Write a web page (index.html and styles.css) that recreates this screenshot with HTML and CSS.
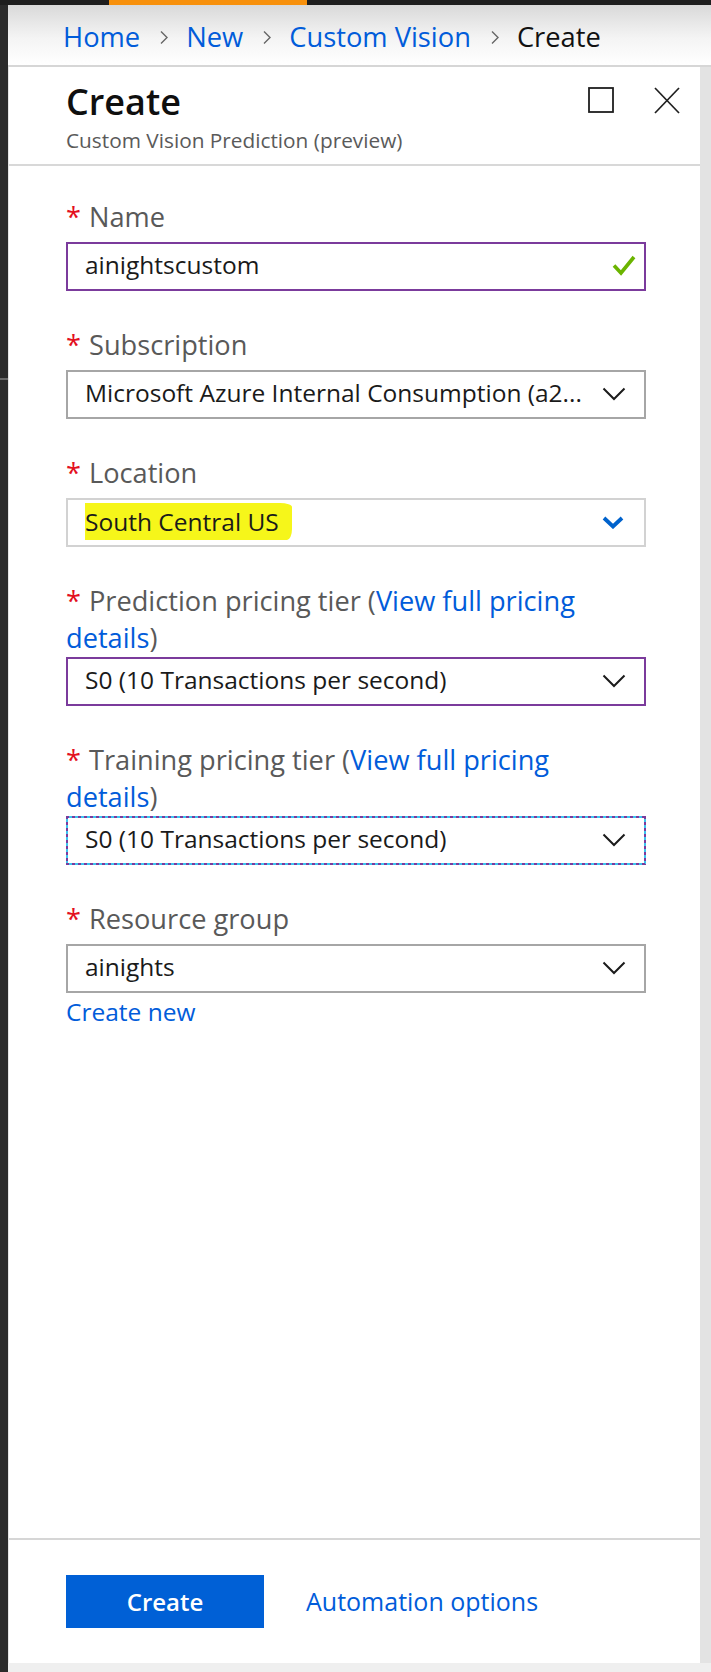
FILE: index.html
```html
<!DOCTYPE html>
<html lang="en">
<head>
<meta charset="utf-8">
<title>Create - Custom Vision</title>
<link rel="stylesheet" href="styles.css">
</head>
<body>
<div class="topbar"><div class="topbar-accent"></div></div>
<div class="shell">
  <div class="leftrail"></div>
  <div class="main">
    <nav class="breadcrumb">
      <a class="crumb" href="#">Home</a>
      <svg class="sep" width="10" height="15" viewBox="0 0 10 15"><polyline points="2,1.5 8,7.5 2,13.5" fill="none" stroke="#666" stroke-width="1.4"/></svg>
      <a class="crumb" href="#">New</a>
      <svg class="sep" width="10" height="15" viewBox="0 0 10 15"><polyline points="2,1.5 8,7.5 2,13.5" fill="none" stroke="#666" stroke-width="1.4"/></svg>
      <a class="crumb" href="#">Custom Vision</a>
      <svg class="sep" width="10" height="15" viewBox="0 0 10 15"><polyline points="2,1.5 8,7.5 2,13.5" fill="none" stroke="#666" stroke-width="1.4"/></svg>
      <span class="crumb current">Create</span>
    </nav>
    <div class="workspace">
      <section class="blade">
        <header class="blade-header">
          <div class="titles">
            <h1 class="title">Create</h1>
            <p class="subtitle">Custom Vision Prediction (preview)</p>
          </div>
          <div class="actions">
            <svg class="icon-max" width="26" height="26" viewBox="0 0 26 26"><rect x="1" y="1" width="24" height="24" fill="none" stroke="#1f1f1f" stroke-width="1.8"/></svg>
            <svg class="icon-close" width="26" height="27" viewBox="0 0 26 27"><line x1="1" y1="1" x2="25" y2="26" stroke="#1f1f1f" stroke-width="1.7"/><line x1="25" y1="1" x2="1" y2="26" stroke="#1f1f1f" stroke-width="1.7"/></svg>
          </div>
        </header>

        <div class="form">
          <div class="field">
            <div class="label"><span class="req">*</span>Name</div>
            <div class="box box-focus">
              <span class="value">ainightscustom</span>
              <svg class="check" width="24" height="21" viewBox="0 0 24 21"><polyline points="2,10.5 9,18 22,2" fill="none" stroke="#6bb400" stroke-width="3.6"/></svg>
            </div>
          </div>

          <div class="field">
            <div class="label"><span class="req">*</span>Subscription</div>
            <div class="box">
              <span class="value">Microsoft Azure Internal Consumption (a2...</span>
              <svg class="chev" width="24" height="14" viewBox="0 0 24 14"><polyline points="1.5,1.5 12,12 22.5,1.5" fill="none" stroke="#1b1b1b" stroke-width="2"/></svg>
            </div>
          </div>

          <div class="field">
            <div class="label"><span class="req">*</span>Location</div>
            <div class="box box-light">
              <span class="value"><span class="marker">South Central US</span></span>
              <svg class="chev chev-blue" width="22" height="13" viewBox="0 0 22 13"><polyline points="2,2 11,10.5 20,2" fill="none" stroke="#0062cc" stroke-width="3.8"/></svg>
            </div>
          </div>

          <div class="field">
            <div class="label label-two"><span class="req">*</span>Prediction pricing tier (<a class="link" href="#">View full pricing<br>details</a>)</div>
            <div class="box box-focus">
              <span class="value">S0 (10 Transactions per second)</span>
              <svg class="chev" width="24" height="14" viewBox="0 0 24 14"><polyline points="1.5,1.5 12,12 22.5,1.5" fill="none" stroke="#1b1b1b" stroke-width="2"/></svg>
            </div>
          </div>

          <div class="field">
            <div class="label label-two"><span class="req">*</span>Training pricing tier (<a class="link" href="#">View full pricing<br>details</a>)</div>
            <div class="box box-dashed">
              <span class="value">S0 (10 Transactions per second)</span>
              <svg class="chev" width="24" height="14" viewBox="0 0 24 14"><polyline points="1.5,1.5 12,12 22.5,1.5" fill="none" stroke="#1b1b1b" stroke-width="2"/></svg>
            </div>
          </div>

          <div class="field field-last">
            <div class="label"><span class="req">*</span>Resource group</div>
            <div class="box">
              <span class="value">ainights</span>
              <svg class="chev" width="24" height="14" viewBox="0 0 24 14"><polyline points="1.5,1.5 12,12 22.5,1.5" fill="none" stroke="#1b1b1b" stroke-width="2"/></svg>
            </div>
            <a class="create-new" href="#">Create new</a>
          </div>
        </div>

        <footer class="blade-footer">
          <button class="btn-primary" type="button">Create</button>
          <a class="footer-link" href="#">Automation options</a>
        </footer>
      </section>
      <div class="gutter"></div>
    </div>
    <div class="bottom-strip"></div>
  </div>
</div>
</body>
</html>
```

FILE: styles.css
```css
* {
  box-sizing: border-box;
}

html, body {
  margin: 0;
  padding: 0;
}

body {
  width: 711px;
  height: 1672px;
  overflow: hidden;
  background: #2b2b2b;
  font-family: "Open Sans", "Noto Sans", sans-serif;
  color: #1b1b1b;
}

a {
  text-decoration: none;
}

.topbar {
  height: 5px;
  background: #1e1e1e;
  display: flex;
}

.topbar-accent {
  margin-left: 109px;
  width: 198px;
  height: 5px;
  background: #f7900c;
}

.shell {
  display: flex;
  height: 1667px;
}

.leftrail {
  width: 8px;
  flex: none;
  background: linear-gradient(to bottom, #2b2b2b 0, #2b2b2b 373px, #6a6a6a 373px, #6a6a6a 375px, #2b2b2b 375px);
}

.main {
  flex: 1;
  display: flex;
  flex-direction: column;
  min-width: 0;
}

.breadcrumb {
  height: 60px;
  padding: 4px 0 0 55px;
  display: flex;
  align-items: center;
  background: linear-gradient(to bottom, #d9d9d9 0%, #f4f4f4 55%, #ffffff 100%);
  font-size: 27.3px;
  line-height: 56px;
}

.crumb {
  color: #015cda;
  white-space: nowrap;
}

.crumb.current {
  color: #111;
}

.sep {
  flex: none;
  margin: 0 17px 0 19px;
}

.workspace {
  display: flex;
  border-top: 2px solid #d6d6d6;
  height: 1598px;
}

.blade {
  width: 692px;
  flex: none;
  height: 1596px;
  background: #fff;
  border-left: 1px solid #e4e4e4;
  display: flex;
  flex-direction: column;
}

.gutter {
  flex: 1;
  background: #e3e3e3;
}

.bottom-strip {
  height: 9px;
  background: #efefef;
}

/* Blade header */
.blade-header {
  height: 99px;
  flex: none;
  border-bottom: 2px solid #d8d8d8;
  padding: 9px 20px 0 57px;
  display: flex;
  justify-content: space-between;
  align-items: flex-start;
}

.title {
  margin: 0;
  font-size: 36px;
  font-weight: 600;
  line-height: 52px;
  color: #0f0f0f;
}

.subtitle {
  margin: -2px 0 0;
  font-size: 20.8px;
  line-height: 28px;
  color: #5a5a5a;
}

.actions {
  display: flex;
  align-items: flex-start;
  gap: 40px;
  margin-top: 11px;
}

/* Form */
.form {
  flex: 1;
  padding: 32px 54px 0 57px;
}

.field {
  margin-bottom: 35px;
}

.label {
  font-size: 27.2px;
  line-height: 37px;
  color: #595959;
  margin-bottom: 7px;
}

.label-two {
  margin-bottom: 1px;
}

.req {
  color: #e3101e;
  margin-right: 8px;
  margin-left: 0;
}

.link {
  color: #015cda;
}

.box {
  position: relative;
  height: 49px;
  border: 2px solid #a6a6a6;
  display: flex;
  align-items: center;
  justify-content: space-between;
  padding: 0 18px 0 17px;
}

.box-focus {
  border-color: #7b3b9c;
}

.box-light {
  border-color: #d2d2d2;
}

.box-dashed {
  border-color: #3cc3ef;
}

.box-dashed::after {
  content: "";
  position: absolute;
  inset: -2px;
  pointer-events: none;
  background:
    repeating-linear-gradient(90deg, #7b3b9c 0 3px, transparent 3px 6px) top / 100% 2px no-repeat,
    repeating-linear-gradient(90deg, #7b3b9c 0 3px, transparent 3px 6px) bottom / 100% 2px no-repeat,
    repeating-linear-gradient(180deg, #7b3b9c 0 3px, transparent 3px 6px) left / 2px 100% no-repeat,
    repeating-linear-gradient(180deg, #7b3b9c 0 3px, transparent 3px 6px) right / 2px 100% no-repeat;
}

.value {
  font-size: 24.5px;
  line-height: 34px;
  color: #1a1a1a;
  white-space: nowrap;
  overflow: hidden;
  margin-top: -3px;
}

.marker {
  display: inline-block;
  background: #f6f61a;
  margin-left: -7px;
  padding: 0 13px 0 7px;
  line-height: 37px;
  border-radius: 3px 12px 5px 9px / 9px 4px 11px 5px;
}

.check {
  flex: none;
  margin-right: -10px;
  margin-top: -3px;
}

.chev {
  flex: none;
  margin-top: -1px;
}

.chev-blue {
  margin-right: 2px;
}

.create-new {
  display: block;
  font-size: 24.5px;
  line-height: 37px;
  color: #015cda;
}

/* Footer */
.blade-footer {
  flex: none;
  height: 125px;
  border-top: 2px solid #d6d6d6;
  padding: 35px 0 0 57px;
  display: flex;
  align-items: flex-start;
}

.btn-primary {
  width: 198px;
  height: 53px;
  border: none;
  background: #0060d6;
  color: #fff;
  font-family: "Open Sans", "Noto Sans", sans-serif;
  font-size: 24px;
  font-weight: 600;
  padding: 0;
}

.footer-link {
  margin-left: 42px;
  font-size: 25px;
  line-height: 53px;
  color: #015cda;
}
```
